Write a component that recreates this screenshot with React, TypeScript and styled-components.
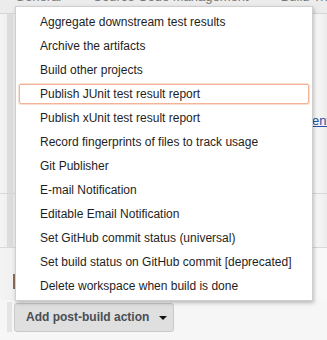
import React from "react";
import styled, { createGlobalStyle } from "styled-components";

const Global = createGlobalStyle`
  html, body { margin: 0; padding: 0; }
  body {
    background: #f6f6f6;
    font-family: "Liberation Sans", Arial, sans-serif;
    font-size: 12px;
    color: #222;
    width: 327px;
    height: 340px;
    overflow: hidden;
  }
`;

const Page = styled.div`
  position: relative;
  width: 327px;
  height: 340px;
  display: flex;
  flex-direction: column;
  overflow: hidden;
`;

const TabBar = styled.div`
  height: 13px;
  flex: none;
  background: #ececec;
  border-bottom: 1px solid #d6d6d6;
  display: flex;
  gap: 32px;
  padding-left: 15px;
  overflow: hidden;
`;

const Tab = styled.span`
  color: #777;
  font-size: 13px;
  line-height: 13px;
  margin-top: -10px;
  white-space: nowrap;
`;

const Panel = styled.div<{ $h: number }>`
  height: ${(p) => p.$h}px;
  flex: none;
  display: flex;
  border-bottom: 1px solid #d8d8d8;
  background: linear-gradient(90deg, #f4f4f4 0, #ececec 14px, #fff 16px, #fff 310px, #ececec 327px);
`;

const Gutter = styled.div`
  width: 7px;
  flex: none;
`;

const SideBar = styled.div`
  width: 6px;
  flex: none;
  background: #dcdcdc;
`;

const PanelMain = styled.div`
  flex: 1;
  display: flex;
  justify-content: flex-end;
  align-items: flex-start;
  padding-top: 99px;
  overflow: hidden;
`;

const SideLink = styled.a`
  color: #2b4fa8;
  text-decoration: underline;
  font-size: 13px;
  line-height: 16px;
  white-space: nowrap;
  margin-right: -3px;
`;

const HeadingRow = styled.div`
  height: 52px;
  flex: none;
  display: flex;
  align-items: center;
  padding-left: 13px;
  background: linear-gradient(90deg, #f4f4f4 0, #f0f0f0 14px, #f8f8f8 16px);
`;

const HeadingMark = styled.div`
  width: 2px;
  height: 15px;
  margin-top: 14px;
  background: #8a6e5a;
`;

const ButtonRow = styled.div`
  display: flex;
  align-items: center;
  gap: 2px;
  padding-left: 7px;
  margin-top: 2px;
`;

const ButtonBar = styled.div`
  width: 5px;
  height: 30px;
  background: #e4e4e4;
`;

const Button = styled.button`
  box-sizing: border-box;
  height: 29px;
  width: 160px;
  display: flex;
  align-items: center;
  gap: 10px;
  padding: 0 0 0 11px;
  white-space: nowrap;
  background: #dfdfdf;
  border: 1px solid #c9c9c9;
  border-radius: 3px;
  font-family: "Liberation Sans", Arial, sans-serif;
  font-weight: bold;
  font-size: 12px;
  color: #4a4e55;
`;

const Caret = styled.span`
  flex: none;
  width: 0;
  height: 0;
  border-left: 4px solid transparent;
  border-right: 4px solid transparent;
  border-top: 4px solid #111;
  margin-top: 1px;
`;

const Menu = styled.ul`
  position: absolute;
  top: 6px;
  left: 15px;
  width: 298px;
  margin: 0;
  padding: 3px 0 2px;
  list-style: none;
  background: #fff;
  border: 1px solid #cfcfcf;
  box-sizing: border-box;
  box-shadow: 1px 2px 4px rgba(0, 0, 0, 0.25);
`;

const Item = styled.li<{ $active?: boolean }>`
  box-sizing: border-box;
  height: ${(p) => (p.$active ? "20px" : "24px")};
  line-height: ${(p) => (p.$active ? "18px" : "24px")};
  margin: ${(p) => (p.$active ? "2px 3px" : "0 3px")};
  padding-left: ${(p) => (p.$active ? "20px" : "21px")};
  border: ${(p) => (p.$active ? "1px solid #f2b396" : "none")};
  box-shadow: ${(p) => (p.$active ? "0 0 0 1px rgba(246, 196, 172, 0.55)" : "none")};
  border-radius: 2px;
  white-space: nowrap;
  font-size: 12px;
  color: #1e1e1e;
`;

const items = [
  "Aggregate downstream test results",
  "Archive the artifacts",
  "Build other projects",
  "Publish JUnit test result report",
  "Publish xUnit test result report",
  "Record fingerprints of files to track usage",
  "Git Publisher",
  "E-mail Notification",
  "Editable Email Notification",
  "Set GitHub commit status (universal)",
  "Set build status on GitHub commit [deprecated]",
  "Delete workspace when build is done",
];

export default function App() {
  return (
    <>
      <Global />
      <Page>
        <TabBar>
          <Tab>General</Tab>
          <Tab>Source Code Management</Tab>
          <Tab>Build Triggers</Tab>
        </TabBar>
        <Panel $h={179}>
          <Gutter />
          <SideBar />
          <PanelMain>
            <SideLink href="#">Environment</SideLink>
          </PanelMain>
        </Panel>
        <Panel $h={53}>
          <Gutter />
          <SideBar />
        </Panel>
        <HeadingRow>
          <HeadingMark />
        </HeadingRow>
        <ButtonRow>
          <ButtonBar />
          <Button>
            Add post-build action
            <Caret />
          </Button>
        </ButtonRow>
        <Menu>
          {items.map((t, i) => (
            <Item key={t} $active={i === 3}>
              {t}
            </Item>
          ))}
        </Menu>
      </Page>
    </>
  );
}
